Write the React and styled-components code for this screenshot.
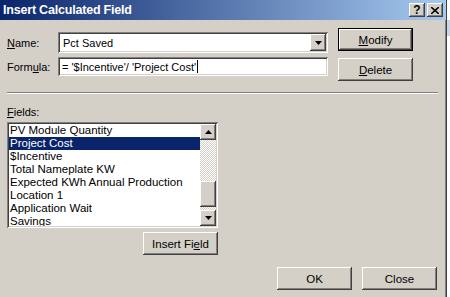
import React from "react";
import styled, { createGlobalStyle, css } from "styled-components";

const GlobalStyle = createGlobalStyle`
  html, body {
    margin: 0;
    padding: 0;
    background: #ffffff;
  }
  body {
    font-family: "Liberation Sans", Arial, sans-serif;
    font-size: 11px;
    color: #000000;
  }
`;

const raised = css`
  box-shadow: inset -1px -1px #404040, inset 1px 1px #ffffff,
    inset -2px -2px #808080, inset 2px 2px #d4d0c8;
`;

const sunken = css`
  box-shadow: inset 1px 1px #808080, inset -1px -1px #ffffff,
    inset 2px 2px #404040, inset -2px -2px #d4d0c8;
`;

const Page = styled.div`
  display: flex;
  width: 450px;
  height: 297px;
  overflow: hidden;
`;

const Dialog = styled.div`
  width: 446px;
  flex-shrink: 0;
  background: #d4d0c8;
  border-right: 1px solid #404040;
  box-shadow: inset -1px 0 #808080;
  display: flex;
  flex-direction: column;
`;

const Backdrop = styled.div`
  flex: 1;
  background: #ffffff;
  display: flex;
  flex-direction: column;
`;

const BackdropHead = styled.div`
  height: 16px;
  margin-top: 20px;
  background: #c9d6ea;
`;

const TitleBar = styled.div`
  height: 20px;
  display: flex;
  align-items: center;
  padding: 0 3px 0 3px;
  background: linear-gradient(to right, #0a246a, #a6caf0);
`;

const Title = styled.div`
  flex: 1;
  color: #ffffff;
  font-weight: bold;
  font-size: 12.5px;
  letter-spacing: -0.2px;
`;

const CaptionButton = styled.div`
  width: 16px;
  height: 14px;
  margin-left: ${(p) => (p.$gap ? "2px" : "0")};
  background: #d4d0c8;
  ${raised};
  display: flex;
  align-items: center;
  justify-content: center;
  font-weight: bold;
  font-size: 12px;
  line-height: 1;
`;

const Body = styled.div`
  flex: 1;
  display: flex;
  flex-direction: column;
  padding: 0 8px 0 7px;
`;

const TopArea = styled.div`
  display: flex;
  gap: 10px;
`;

const FormColumn = styled.div`
  width: 321px;
  padding-top: 12px;
  display: flex;
  flex-direction: column;
  gap: 4px;
`;

const FieldRow = styled.div`
  display: flex;
  align-items: center;
`;

const Label = styled.label`
  width: 51px;
  flex-shrink: 0;
`;

const ComboBox = styled.div`
  flex: 1;
  height: 21px;
  background: #ffffff;
  ${sunken};
  display: flex;
  align-items: center;
  padding: 2px;
  box-sizing: border-box;
`;

const InputBox = styled.div`
  flex: 1;
  height: 19px;
  background: #ffffff;
  ${sunken};
  display: flex;
  align-items: center;
  padding: 2px 4px;
  box-sizing: border-box;
  white-space: pre;
`;

const ValueText = styled.span`
  flex: 1;
  padding-left: 3px;
`;

const Caret = styled.span`
  display: inline-block;
  width: 1px;
  height: 13px;
  background: #000000;
  margin-left: 1px;
`;

const DropButton = styled.div`
  width: 16px;
  height: 17px;
  background: #d4d0c8;
  ${raised};
  display: flex;
  align-items: center;
  justify-content: center;
`;

const ButtonColumn = styled.div`
  padding-top: 8px;
  display: flex;
  flex-direction: column;
  gap: 7px;
`;

const Button = styled.div`
  width: 75px;
  height: 23px;
  box-sizing: border-box;
  background: #d4d0c8;
  ${raised};
  display: flex;
  align-items: center;
  justify-content: center;
  font-size: 11.5px;
  ${(p) =>
    p.$default &&
    css`
      border: 1px solid #000000;
      box-shadow: inset -1px -1px #404040, inset 1px 1px #ffffff,
        inset -2px -2px #808080;
    `}
`;

const Separator = styled.div`
  margin-top: 11px;
  width: 431px;
  height: 0;
  border-top: 1px solid #808080;
  border-bottom: 1px solid #ffffff;
`;

const FieldsLabel = styled.div`
  margin-top: 12px;
  height: 16px;
`;

const LowerArea = styled.div`
  width: 211px;
  display: flex;
  flex-direction: column;
  align-items: flex-end;
  gap: 4px;
`;

const ListBox = styled.div`
  width: 211px;
  height: 106px;
  box-sizing: border-box;
  padding: 2px;
  background: #ffffff;
  ${sunken};
  display: flex;
  overflow: hidden;
`;

const ListItems = styled.div`
  flex: 1;
  overflow: hidden;
`;

const ListItem = styled.div`
  height: 13px;
  line-height: 13px;
  padding-left: 1px;
  white-space: nowrap;
  font-size: 11.5px;
  background: ${(p) => (p.$selected ? "#0a246a" : "transparent")};
  color: ${(p) => (p.$selected ? "#ffffff" : "#000000")};
`;

const ScrollBar = styled.div`
  width: 16px;
  display: flex;
  flex-direction: column;
`;

const ScrollButton = styled.div`
  width: 16px;
  height: 16px;
  flex-shrink: 0;
  background: #d4d0c8;
  ${raised};
  display: flex;
  align-items: center;
  justify-content: center;
`;

const ScrollTrack = styled.div`
  flex: ${(p) => p.$grow};
  background-color: #ffffff;
  background-image: conic-gradient(
    #d4d0c8 25%,
    #ffffff 0 50%,
    #d4d0c8 0 75%,
    #ffffff 0
  );
  background-size: 2px 2px;
`;

const ScrollThumb = styled.div`
  height: 26px;
  flex-shrink: 0;
  background: #d4d0c8;
  ${raised};
`;

const Footer = styled.div`
  margin-top: 12px;
  display: flex;
  justify-content: flex-end;
  gap: 10px;
  padding-right: 1px;
`;

const Arrow = ({ up }) => (
  <svg width="7" height="4" viewBox="0 0 7 4">
    <path d={up ? "M3.5 0 L7 4 L0 4 Z" : "M0 0 L7 0 L3.5 4 Z"} fill="#000" />
  </svg>
);

const fields = [
  "PV Module Quantity",
  "Project Cost",
  "$Incentive",
  "Total Nameplate KW",
  "Expected KWh Annual Production",
  "Location 1",
  "Application Wait",
  "Savings",
];

const App = () => {
  return (
    <>
      <GlobalStyle />
      <Page>
        <Dialog>
          <TitleBar>
            <Title>Insert Calculated Field</Title>
            <CaptionButton>?</CaptionButton>
            <CaptionButton $gap>
              <svg width="8" height="7" viewBox="0 0 8 7">
                <path d="M0 0 L8 7 M8 0 L0 7" stroke="#000" strokeWidth="1.6" />
              </svg>
            </CaptionButton>
          </TitleBar>
          <Body>
            <TopArea>
              <FormColumn>
                <FieldRow>
                  <Label>
                    <u>N</u>ame:
                  </Label>
                  <ComboBox>
                    <ValueText>Pct Saved</ValueText>
                    <DropButton>
                      <Arrow />
                    </DropButton>
                  </ComboBox>
                </FieldRow>
                <FieldRow>
                  <Label>
                    Form<u>u</u>la:
                  </Label>
                  <InputBox>
                    = '$Incentive'/ 'Project Cost'
                    <Caret />
                  </InputBox>
                </FieldRow>
              </FormColumn>
              <ButtonColumn>
                <Button $default>
                  <u>M</u>odify
                </Button>
                <Button>
                  <u>D</u>elete
                </Button>
              </ButtonColumn>
            </TopArea>
            <Separator />
            <FieldsLabel>
              <u>F</u>ields:
            </FieldsLabel>
            <LowerArea>
              <ListBox>
                <ListItems>
                  {fields.map((f) => (
                    <ListItem key={f} $selected={f === "Project Cost"}>
                      {f}
                    </ListItem>
                  ))}
                </ListItems>
                <ScrollBar>
                  <ScrollButton>
                    <Arrow up />
                  </ScrollButton>
                  <ScrollTrack $grow={42} />
                  <ScrollThumb />
                  <ScrollTrack $grow={3} />
                  <ScrollButton>
                    <Arrow />
                  </ScrollButton>
                </ScrollBar>
              </ListBox>
              <Button>
                Insert Fi<u>e</u>ld
              </Button>
            </LowerArea>
            <Footer>
              <Button>OK</Button>
              <Button>Close</Button>
            </Footer>
          </Body>
        </Dialog>
        <Backdrop>
          <BackdropHead />
        </Backdrop>
      </Page>
    </>
  );
};

export default App;
